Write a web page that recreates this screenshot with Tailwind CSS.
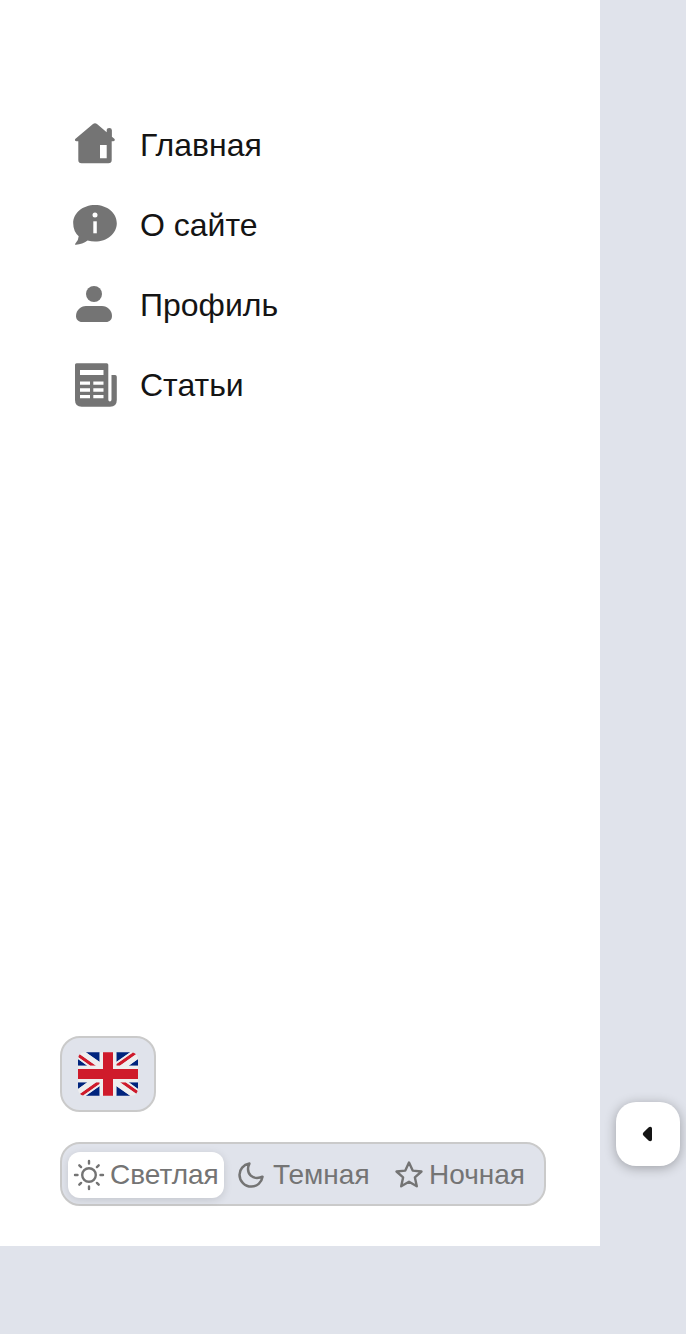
<!DOCTYPE html>
<html lang="ru">
<head>
<meta charset="utf-8">
<title>Меню</title>
<script src="https://cdn.jsdelivr.net/npm/@tailwindcss/browser@4"></script>
</head>
<body class="bg-[#e0e3eb] font-['Liberation_Sans',Arial,sans-serif] text-[#141414]">
<div class="flex h-[1334px] w-[686px] items-start overflow-hidden">
  <aside class="flex h-[1246px] w-[600px] shrink-0 flex-col justify-between bg-white px-[60px] pt-[105px] pb-10">
    <nav class="flex flex-col text-[32px] leading-[80px]">
      <a class="flex h-20 items-center gap-[10px]">
        <svg class="h-[70px] w-[70px] shrink-0 fill-[#747474]" viewBox="60 110 70 70"><path fill-rule="evenodd" d="M93 124q2-1.600 4 0l9.700 8.300v-2q0-2.300 2.600-2.300t2.600 2.300v6.400l2.700 2.400q.8 2-1.500 2.200h-1.400V160q0 3.300-3.300 3.300H81.600q-3.300 0-3.300-3.300V141.300H76.600q-2.400-.2-1.400-2.200zM100 145v13.300h6.700V145z"/></svg>
        <span>Главная</span>
      </a>
      <a class="flex h-20 items-center gap-[10px]">
        <svg class="h-[70px] w-[70px] shrink-0 fill-[#747474]" viewBox="60 190 70 70"><path d="M95 205c12.100 0 21.800 8 21.800 18.300S107.100 241.600 95 241.600q-3.800 0-7.400-1-5.600 4.300-12.200 4.100-1-.3 0-1.100 3-2.600 3.300-7.300-5.500-5-5.500-13C73.200 213 82.900 205 95 205z"/><circle cx="95" cy="215" r="2.500" fill="#fff"/><path fill="#fff" d="M93.300 221.300h3.500v12h-3.500z"/></svg>
        <span>О сайте</span>
      </a>
      <a class="flex h-20 items-center gap-[10px]">
        <svg class="h-[70px] w-[70px] shrink-0 fill-[#747474]" viewBox="60 270 70 70"><circle cx="94" cy="294" r="8"/><path d="M86 306h16c5.500 0 10 4.500 10 10 0 3.500-2.500 6-6 6H82c-3.500 0-6-2.500-6-6 0-5.500 4.500-10 10-10z"/></svg>
        <span>Профиль</span>
      </a>
      <a class="flex h-20 items-center gap-[10px]">
        <svg class="h-[70px] w-[70px] shrink-0 fill-[#747474]" viewBox="60 350 70 70"><path fill-rule="evenodd" d="M76.600 363.200H106.700q1.600 0 1.600 1.600V399.500q0 1.900 1.600 1.900t1.600-1.900V375h3.600q1.700 0 1.700 1.700V400q0 6.700-6.700 6.700H81.700Q75 406.700 75 400V364.800q0-1.600 1.600-1.600zM80 370v5h23.500v-5zM80 381.500v3.300h10v-3.300zm13.300 0v3.300h10.200v-3.300zM80 388.300v3.400h10v-3.400zm13.300 0v3.400h10.200v-3.400zM80 395v3.300h10V395zm13.300 0v3.300h10.200V395z"/></svg>
        <span>Статьи</span>
      </a>
    </nav>
    <div class="flex flex-col items-start gap-[30px]">
      <button class="flex h-[76px] w-24 items-center justify-center rounded-[20px] border-2 border-[#cacaca] bg-[#e0e3eb]">
        <svg class="h-[60px] w-[60px]" viewBox="0 0 36 36"><path fill="#00247D" d="M0 9.059V13h5.628zM4.664 31H13v-5.837zM23 25.164V31h8.335zM0 23v3.941L5.630 23zM31.337 5H23v5.837zM36 26.942V23h-5.631zM36 13V9.059L30.371 13zM13 5H4.664L13 10.837z"/><path fill="#CF1B2B" d="M25.140 23l9.712 6.801c.471-.479.808-1.082.99-1.749L28.627 23H25.140zM13 23h-2.141l-9.711 6.800c.521.53 1.189.909 1.938 1.085L13 23.943V23zm10-10h2.141l9.711-6.800c-.521-.53-1.188-.909-1.937-1.085L23 12.057V13zm-12.141 0L1.148 6.200C.677 6.680.34 7.282.157 7.949L7.372 13h3.487z"/><path fill="#EEE" d="M36 21H21v10h2v-5.836L31.335 31H32c1.117 0 2.126-.461 2.852-1.199L25.140 23h3.487l7.215 5.052c.093-.337.158-.686.158-1.052v-.058L30.369 23H36v-2zM0 21v2h5.630L0 26.941V27c0 1.091.439 2.078 1.148 2.800l9.711-6.800H13v.943l-9.814 6.942c.262.07.533.115.814.115h.664L13 25.163V31h2V21H0zM36 9c0-1.091-.439-2.078-1.148-2.800L25.141 13H23v-.943l9.814-6.942C32.553 5.045 32.281 5 32 5h-.663L23 10.837V5h-2v10h15v-2h-5.629L36 9.059V9zM13 5v5.837L4.664 5H4c-1.118 0-2.126.461-2.852 1.200l9.711 6.800H7.372L.157 7.949C.065 8.286 0 8.634 0 9v.059L5.628 13H0v2h15V5h-2z"/><path fill="#CF1B2B" d="M21 15V5h-6v10H0v6h15v10h6V21h15v-6z"/></svg>
      </button>
      <div class="flex h-16 w-[486px] items-center rounded-[20px] border-2 border-[#cacaca] bg-[#e0e3eb] pt-0.5 pl-1.5 text-[28px] leading-[44px] text-[#747474]">
        <button class="flex h-[46px] w-[156px] items-center gap-[5px] rounded-xl bg-white pl-[5px] shadow-[0_2px_8px_rgba(0,0,0,0.13)]">
          <svg class="h-8 w-8 shrink-0 fill-none stroke-[#747474]" viewBox="73 1159 32 32" stroke-width="2.400" stroke-linecap="round"><circle cx="89" cy="1175" r="6.800"/><path d="M89 1161v2.500M89 1186.500v2.500M75 1175h2.500M100.500 1175h2.500M79.300 1165.300l1.800 1.800M96.900 1182.900l1.800 1.800M79.300 1184.700l1.800-1.800M96.900 1167.100l1.800-1.800"/></svg>
          <span>Светлая</span>
        </button>
        <button class="flex h-[46px] w-[156px] items-center gap-[6px] pl-[11px]">
          <svg class="h-8 w-8 shrink-0 fill-none stroke-[#747474]" viewBox="235 1159 32 32" stroke-width="2.500" stroke-linejoin="round"><path d="M249.400 1163.600Q248 1166.400 248 1169C248 1174.600 252.400 1178 257 1178Q260.200 1178 262.500 1176.700C261.600 1182.700 257 1186.600 251.400 1186.600C244.800 1186.600 239.500 1181.200 239.500 1174.700C239.500 1169.300 243.300 1164.800 249.400 1163.600z"/></svg>
          <span>Темная</span>
        </button>
        <button class="flex h-[46px] items-center gap-[4px] pl-[13px]">
          <svg class="h-8 w-8 shrink-0 fill-none stroke-[#747474]" viewBox="393 1159 32 32" stroke-width="2.400" stroke-linejoin="round"><path d="M409 1162.600l3.700 8 8.800.9-6.600 5.900 1.900 8.900-7.800-4.500-7.800 4.500 1.900-8.900-6.600-5.900 8.800-.9z"/></svg>
          <span>Ночная</span>
        </button>
      </div>
    </div>
  </aside>
  <div class="flex h-full flex-col pt-[1102px] pl-4">
    <button class="flex h-16 w-16 items-center justify-center rounded-[20px] bg-white shadow-[0_2px_12px_rgba(0,0,0,0.3)]">
      <svg class="h-8 w-8 fill-[#141414]" viewBox="632 1118 32 32"><path d="M652 1128.600v10.800q0 1.800-1.700 1.800-1 0-1.800-.8l-5.100-5q-1.400-1.400 0-2.800l5.100-5q.8-.8 1.800-.8 1.700 0 1.700 1.800z"/></svg>
    </button>
  </div>
</div>
</body>
</html>
